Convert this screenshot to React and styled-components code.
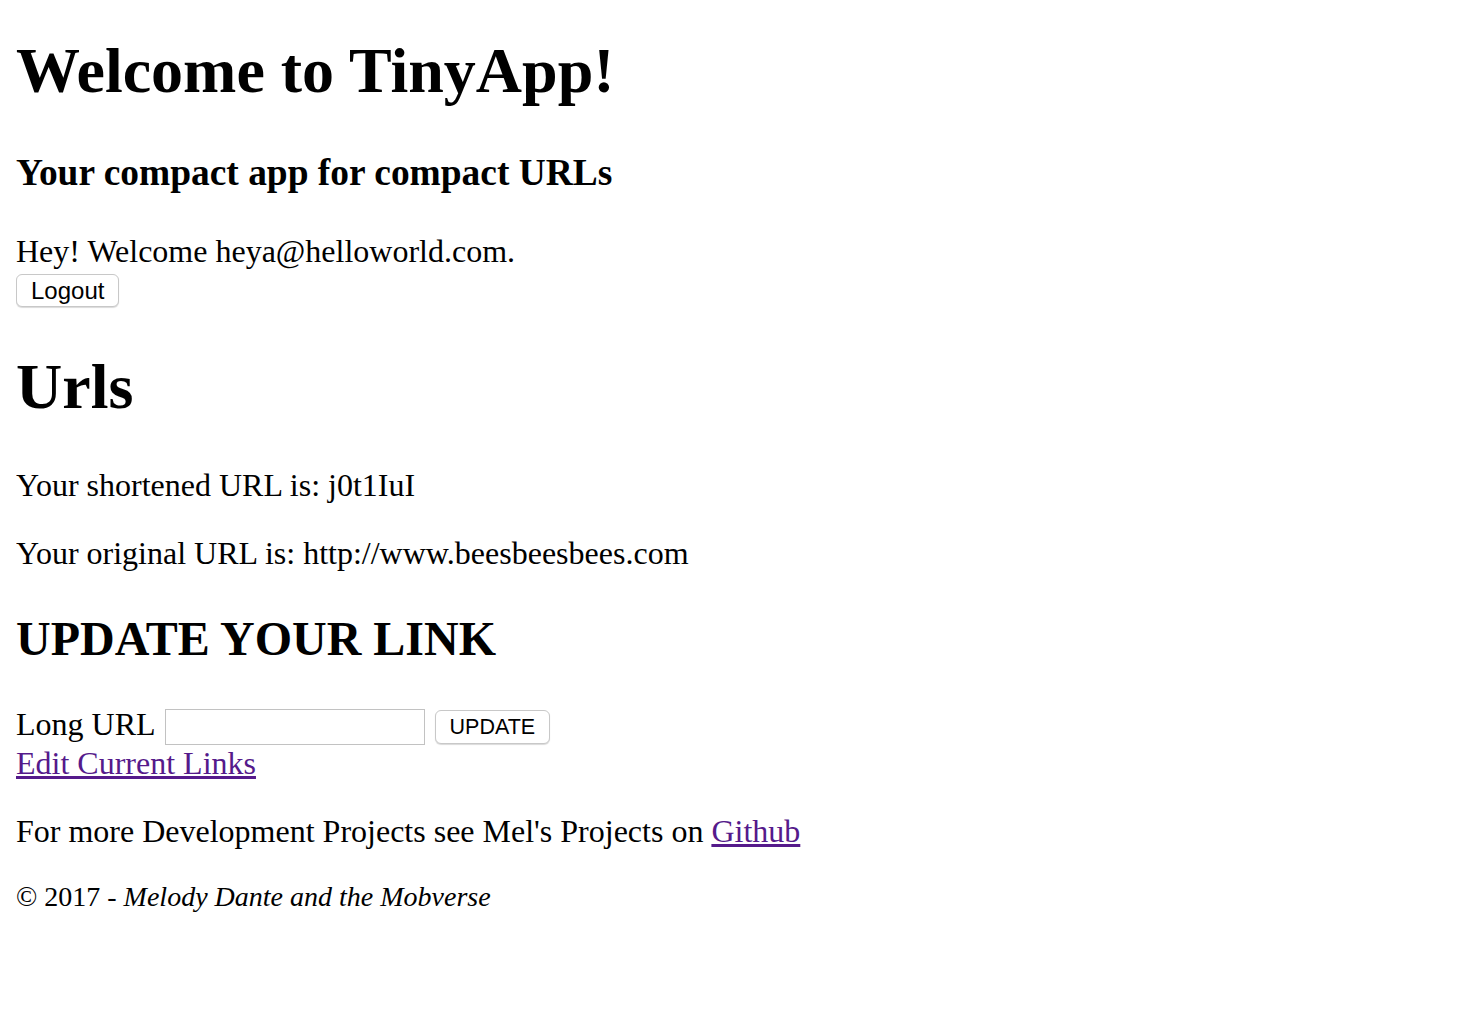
import React from 'react';
import styled, { createGlobalStyle } from 'styled-components';

const Global = createGlobalStyle`
  body {
    margin: 16px;
    background: #ffffff;
    color: #000000;
    font-family: "Liberation Serif", "Times New Roman", serif;
    font-size: 32px;
    line-height: 1.125;
  }
`;

const Title = styled.h1`
  font-size: 2em;
  line-height: normal;
  margin: ${(p) => (p.$top ? '18px 0 0.67em' : '0.67em 0')};
  font-weight: bold;
`;

const Tagline = styled.h3`
  font-size: 1.17em;
  line-height: normal;
  margin: 1em 0 1.05em;
`;

const SubTitle = styled.h2`
  font-size: 1.5em;
  line-height: normal;
  margin: 0.83em 0;
`;

const Text = styled.p`
  margin: 1em 0;
`;

const Btn = styled.button`
  font-family: "Liberation Sans", Arial, sans-serif;
  font-size: ${(p) => p.$size || '24px'};
  line-height: 1;
  color: #000000;
  background: #ffffff;
  border: 1px solid #c8c8c8;
  border-radius: 6px;
  box-shadow: 0 1px 1px rgba(0, 0, 0, 0.15);
  padding: ${(p) => p.$pad || '0 14px'};
  height: ${(p) => p.$h || '33px'};
  margin: 0;
  cursor: pointer;
  vertical-align: middle;
`;

const Field = styled.input`
  width: 256px;
  height: 32px;
  border: 1px solid #c2c2c2;
  padding: 1px;
  margin: 0 10px 0 9px;
  font-size: 20px;
  vertical-align: middle;
  outline: none;
`;

const Link = styled.a`
  color: #551a8b;
  text-decoration: underline;
`;

const Footer = styled.footer`
  font-size: 28px;
  margin: 1em 0;
  em {
    font-style: italic;
  }
`;

export default function App() {
  return (
    <>
      <Global />
      <header>
        <Title $top>Welcome to TinyApp!</Title>
        <Tagline>Your compact app for compact URLs</Tagline>
        <div>
          Hey! Welcome heya@helloworld.com.
          <form onSubmit={(e) => e.preventDefault()}>
            <Btn type="submit">Logout</Btn>
          </form>
        </div>
      </header>
      <Title>Urls</Title>
      <Text>Your shortened URL is: j0t1IuI</Text>
      <Text>Your original URL is: http://www.beesbeesbees.com</Text>
      <SubTitle>UPDATE YOUR LINK</SubTitle>
      <form onSubmit={(e) => e.preventDefault()}>
        Long URL
        <Field type="text" name="longURL" />
        <Btn type="submit" $size="21.5px" $pad="0 14px" $h="34px">UPDATE</Btn>
      </form>
      <Link href="#">Edit Current Links</Link>
      <Text>
        For more Development Projects see Mel's Projects on <Link href="#">Github</Link>
      </Text>
      <Footer>
        © 2017 - <em>Melody Dante and the Mobverse</em>
      </Footer>
    </>
  );
}
